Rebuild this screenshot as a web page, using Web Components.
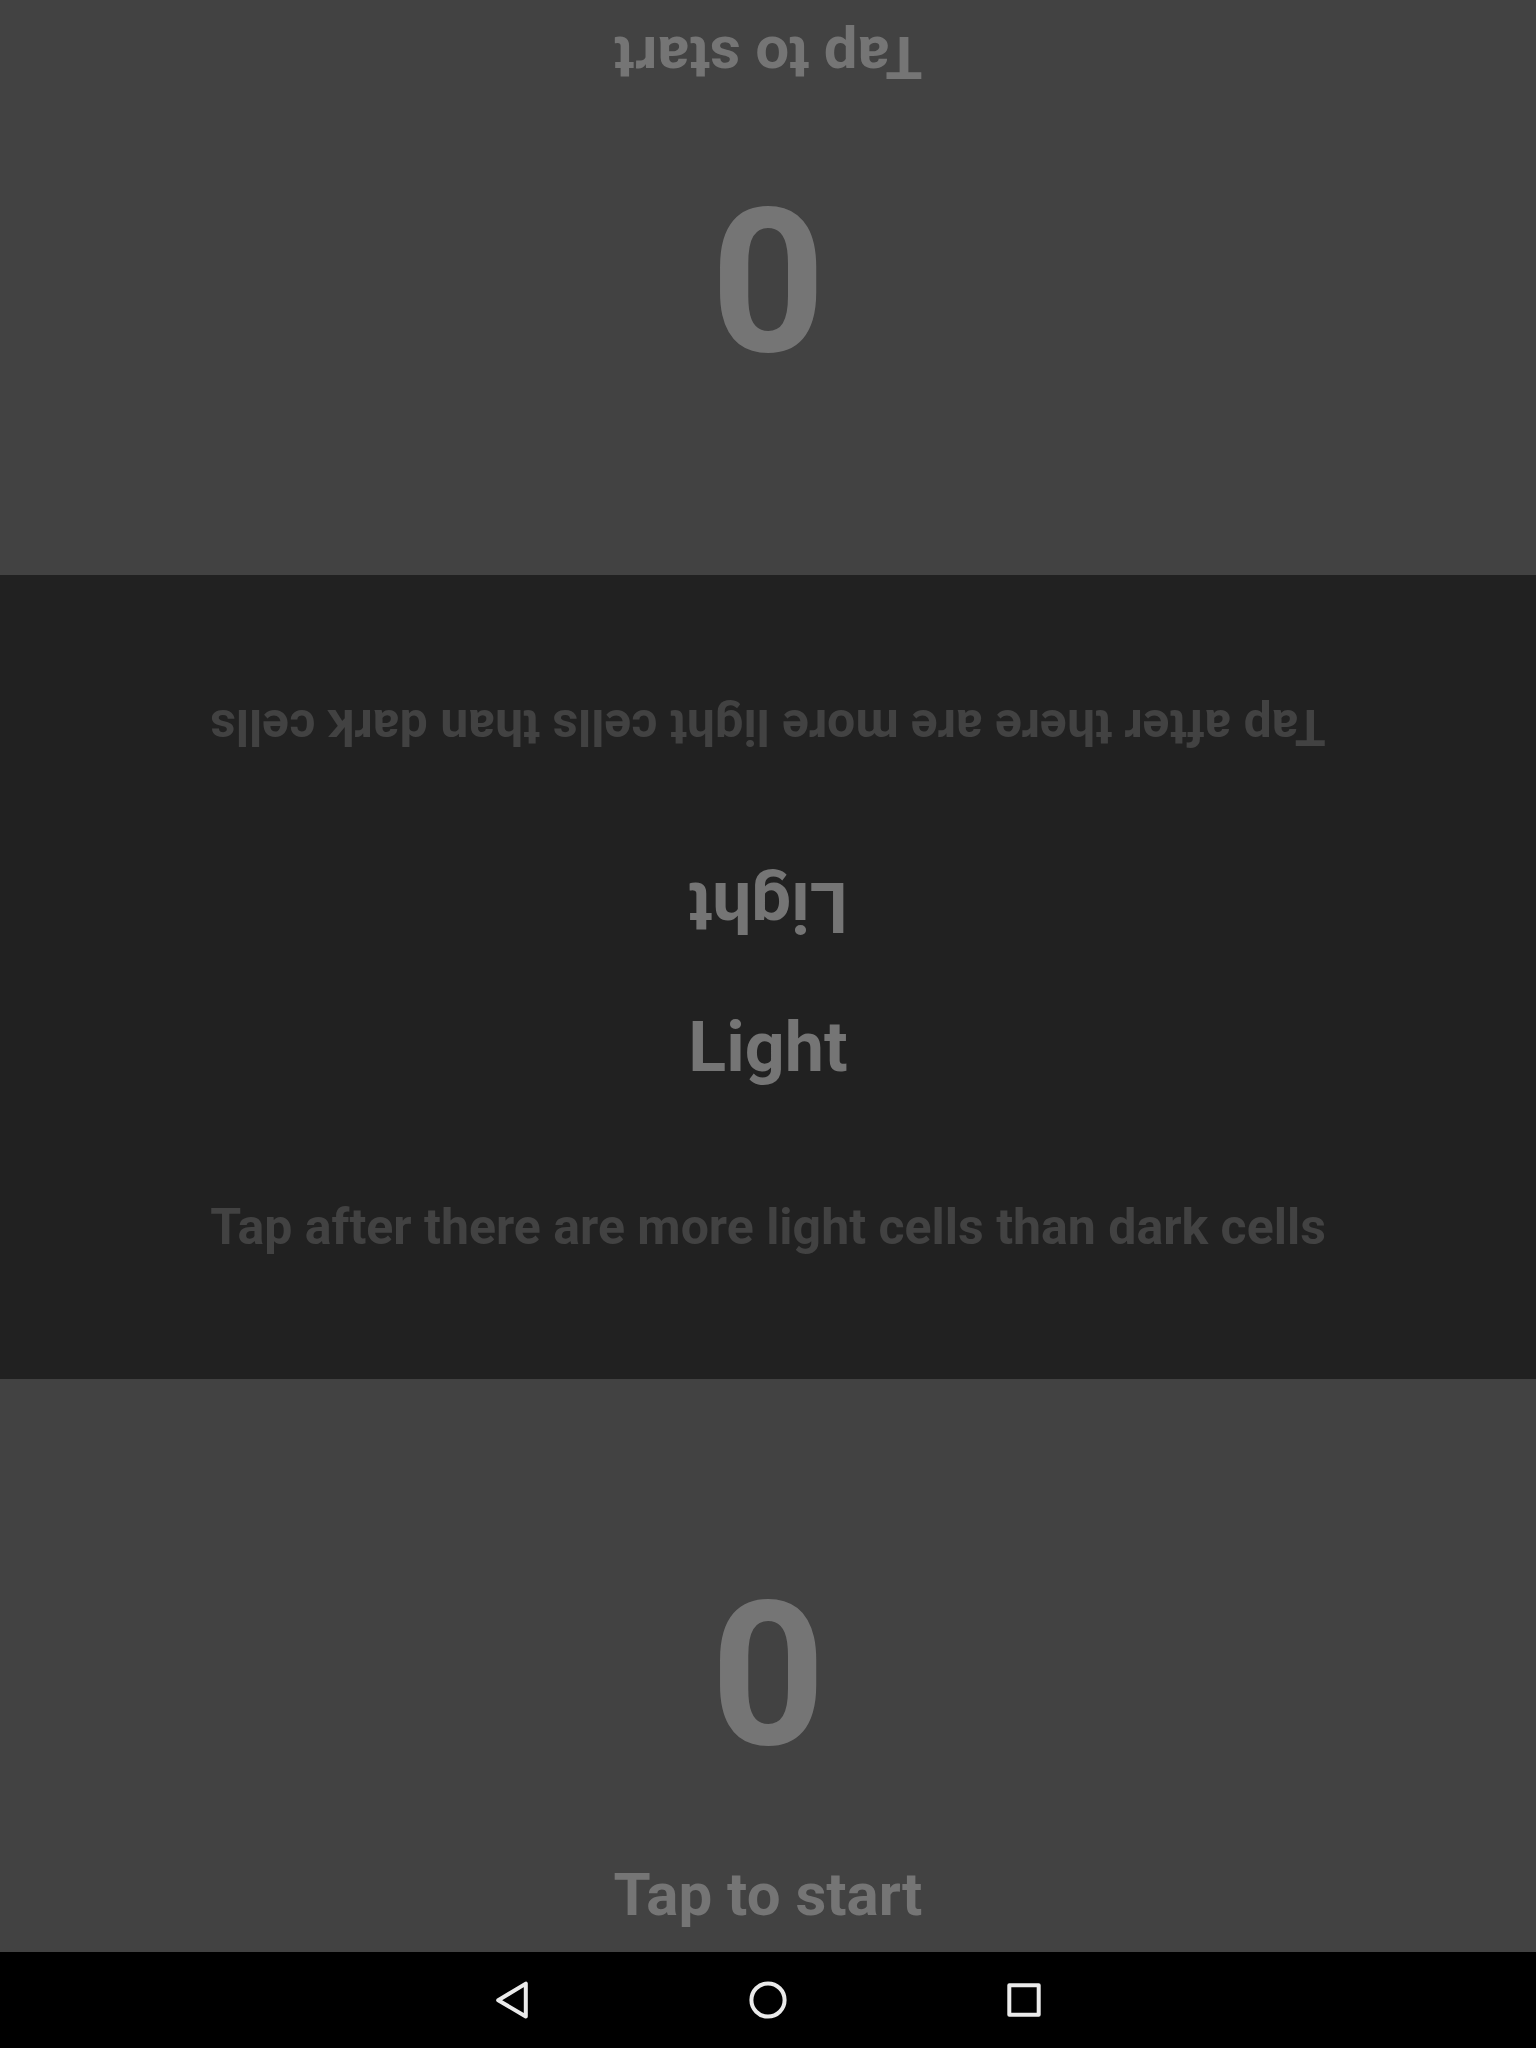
<!DOCTYPE html>
<html lang="en">
<head>
<meta charset="utf-8">
<meta name="viewport" content="width=device-width, initial-scale=1">
<title>Light</title>
<style>
  body { margin: 0; background: #000; font-family: Roboto, "Liberation Sans", sans-serif; font-weight: 700; }
</style>
</head>
<body>
<duel-game></duel-game>
<script>
/* One player's tap area: the score with a prompt under it. */
class PlayerPad extends HTMLElement {
  constructor() {
    super();
    this.attachShadow({ mode: "open" }).innerHTML = `
      <style>
        :host { display: block; background: #424242; }
        :host([flipped]) { transform: rotate(180deg); }
        button {
          display: flex; flex-direction: column; align-items: center; justify-content: flex-end;
          box-sizing: border-box; width: 100%; height: 100%; gap: 67px;
          margin: 0; padding: 0 0 22px; border: 0; background: none;
          color: #757575; font: inherit; cursor: pointer;
        }
        .score { font-size: 200px; line-height: 234px; }
        .prompt { font-size: 60px; line-height: 70px; }
      </style>
      <button type="button">
        <span class="score"><slot name="score"></slot></span>
        <span class="prompt"><slot></slot></span>
      </button>`;
  }
}

/* Round name and rule, facing one player. */
class RoundInfo extends HTMLElement {
  constructor() {
    super();
    this.attachShadow({ mode: "open" }).innerHTML = `
      <style>
        :host {
          display: flex; flex-direction: column; align-items: center;
          flex: 1; box-sizing: border-box; padding-top: 29px; gap: 110px; text-align: center;
        }
        :host([flipped]) { transform: rotate(180deg); }
        h2, p { margin: 0; font-weight: inherit; }
        h2 { font-size: 70px; line-height: 82px; color: #757575; }
        p { font-size: 50px; line-height: 58px; color: #424242; }
      </style>
      <h2><slot name="title"></slot></h2>
      <p><slot></slot></p>`;
  }
}

class SystemBar extends HTMLElement {
  constructor() {
    super();
    this.attachShadow({ mode: "open" }).innerHTML = `
      <style>
        :host { display: flex; justify-content: center; height: 96px; background: #000; }
        button {
          display: flex; align-items: center; justify-content: center;
          flex: 0 1 256px; margin: 0; padding: 0; border: 0; background: none; cursor: pointer;
        }
        svg { width: 48px; height: 48px; fill: none; stroke: #ebebeb; stroke-width: 4; stroke-linejoin: round; }
      </style>
      <button type="button" aria-label="Back"><svg viewBox="0 0 48 48"><path d="M10.2 24.3 37.8 7.6V40.4Z"/></svg></button>
      <button type="button" aria-label="Home"><svg viewBox="0 0 48 48"><circle cx="24" cy="24" r="16.6"/></svg></button>
      <button type="button" aria-label="Recent apps"><svg viewBox="0 0 48 48"><path d="M9.3 9.3H38.7V38.7H9.3Z"/></svg></button>`;
  }
}

class DuelGame extends HTMLElement {
  constructor() {
    super();
    this.attachShadow({ mode: "open" }).innerHTML = `
      <style>
        :host { display: flex; flex-direction: column; min-height: 100vh; }
        main { flex: 1; display: grid; grid-template-rows: 575fr 804fr 573fr; }
        section { display: flex; flex-direction: column; background: #212121; }
      </style>
      <main>
        <player-pad flipped><span slot="score">0</span>Tap to start</player-pad>
        <section>
          <round-info flipped><span slot="title">Light</span>Tap after there are more light cells than dark cells</round-info>
          <round-info><span slot="title">Light</span>Tap after there are more light cells than dark cells</round-info>
        </section>
        <player-pad><span slot="score">0</span>Tap to start</player-pad>
      </main>
      <system-bar></system-bar>`;
  }
}

customElements.define("player-pad", PlayerPad);
customElements.define("round-info", RoundInfo);
customElements.define("system-bar", SystemBar);
customElements.define("duel-game", DuelGame);
</script>
</body>
</html>
